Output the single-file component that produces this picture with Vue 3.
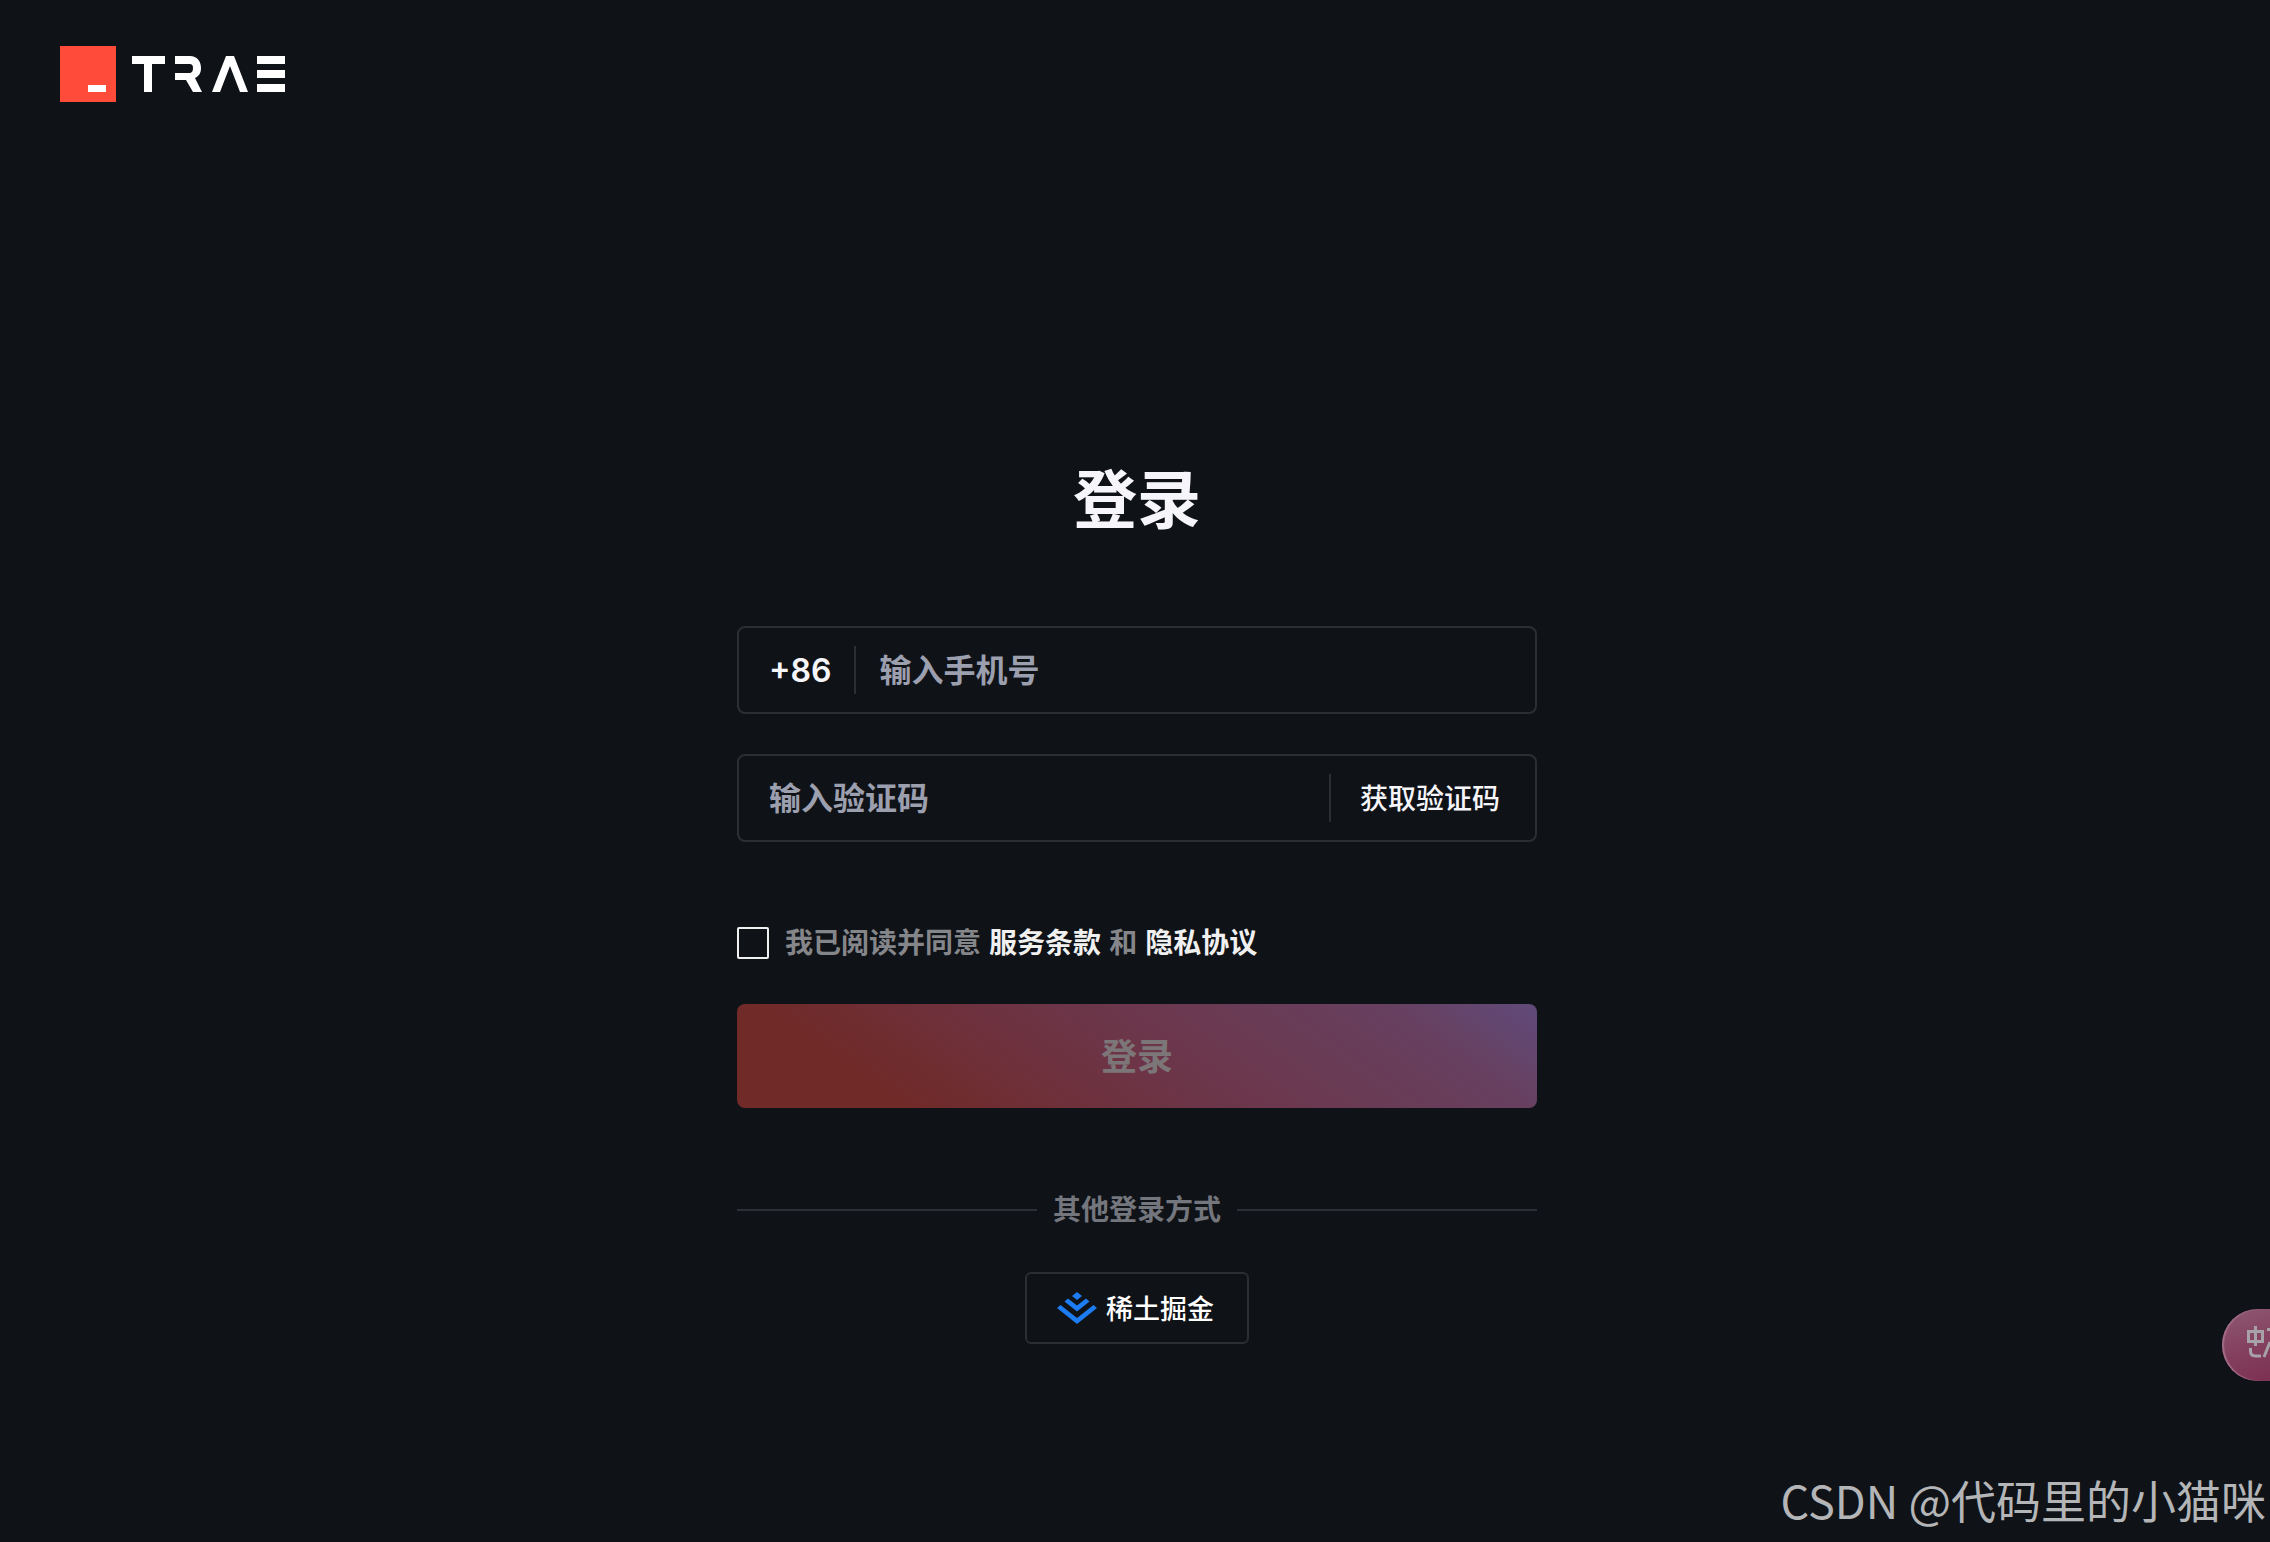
<template>
  <div class="page">
    <header class="header">
      <a href="#" class="logo" aria-label="TRAE">
        <svg width="226" height="56" viewBox="0 0 226 56" fill="none">
          <rect width="56" height="56" fill="#ff4c3a" />
          <rect x="28" y="39" width="18" height="7" fill="#fff" />
          <g fill="#fff">
            <path d="M72 10h33v8H92v28h-8V18H72z" />
            <path d="M115 10h15c7 0 11 5 11 12 0 5-2 8-6 10l7 14h-9l-7-12h-11v-7h14c3 0 4-2 4-5s-1-4-4-4h-14z" />
            <path d="M152 46l14-36h8l14 36h-8l-10-26-10 26z" />
            <path d="M197 10h28v8h-28zM197 24h28v8h-28zM197 38h28v8h-28z" />
          </g>
        </svg>
      </a>
    </header>

    <main class="main">
      <form class="login-form" @submit.prevent>
        <h1 class="title">登录</h1>

        <div class="field phone-field">
          <label for="phone" class="prefix">+86</label>
          <span class="separator"></span>
          <input id="phone" v-model="phone" type="tel" placeholder="输入手机号" />
        </div>

        <div class="field code-field">
          <input id="code" v-model="code" type="text" placeholder="输入验证码" aria-label="输入验证码" />
          <span class="separator"></span>
          <button type="button" class="code-button">获取验证码</button>
        </div>

        <div class="agreement">
          <input id="agree" v-model="agreed" type="checkbox" />
          <p><label for="agree">我已阅读并同意</label> <a href="#">服务条款</a> 和 <a href="#">隐私协议</a></p>
        </div>

        <button type="submit" class="submit-button" :disabled="!canSubmit">登录</button>

        <div class="divider">其他登录方式</div>

        <button type="button" class="juejin-button">
          <svg width="40" height="32" viewBox="0 0 40 32" fill="#1e7cf2">
            <path d="M20 0l5 4-5 4-5-4z" />
            <path d="M20 13.500l9-7 3.500 3L20 19.500 7.500 9.500l3.500-3z" />
            <path d="M20 26l16.500-13 3.500 3-20 16L0 16l3.500-3z" />
          </svg>
          <span>稀土掘金</span>
        </button>
      </form>
    </main>

    <button type="button" class="translate-button" aria-label="翻译">
      <svg width="48" height="72" viewBox="0 0 48 72" fill="none" stroke="#a6a2a7" stroke-width="3">
        <path d="M26.500 22.500h14v10h-14zM33.500 17v20" />
        <path d="M28.500 39v3q0 5 5 5H39M42 48l6-15M45 20.500h3" />
      </svg>
    </button>
    <div class="watermark">CSDN @代码里的小猫咪</div>
  </div>
</template>

<script setup>
import { ref, computed } from 'vue';

const phone = ref('');
const code = ref('');
const agreed = ref(false);

const canSubmit = computed(() => phone.value && code.value && agreed.value);
</script>

<style>
body {
  background: #0f1217;
}
</style>

<style scoped>
.page {
  position: relative;
  min-height: 100vh;
  overflow: hidden;
  background: #0f1217;
  color: #f5f5fa;
  font-family: Inter, "Noto Sans CJK SC", sans-serif;
}

button,
input {
  margin: 0;
  padding: 0;
  border: none;
  background: none;
  color: inherit;
  font: inherit;
}

a {
  color: inherit;
  text-decoration: none;
}

.header {
  padding: 46px 60px 0;
}

.logo {
  display: flex;
  width: fit-content;
}

.main {
  display: flex;
  justify-content: center;
  padding: 350px 0 0 4px;
}

.login-form {
  display: flex;
  flex-direction: column;
  width: 100%;
  max-width: 800px;
}

.title {
  margin: 0 0 78px;
  font-size: 64px;
  line-height: 96px;
  font-weight: 700;
  text-align: center;
}

.field {
  display: flex;
  align-items: center;
  box-sizing: border-box;
  height: 88px;
  padding: 0 30px;
  border: 2px solid #2b2e33;
  border-radius: 8px;
  font-size: 32px;
  font-weight: 600;
}

.field input {
  flex: 1;
  min-width: 0;
  height: 48px;
  outline: none;
}

.field input::placeholder {
  color: #9b9fae;
  opacity: 1;
}

.separator {
  width: 2px;
  height: 48px;
  background: #2b2e33;
}

.phone-field .separator {
  margin: 0 23px;
}

.code-field {
  margin-top: 40px;
  padding-right: 35px;
}

.code-button {
  margin-left: 29px;
  padding-bottom: 2px;
  font-size: 28px;
  font-weight: 500;
  cursor: pointer;
}

.agreement {
  display: flex;
  align-items: center;
  gap: 16px;
  margin: 80px 0 40px;
  font-size: 28px;
  line-height: 42px;
  font-weight: 600;
  color: #85868a;
}

.agreement p {
  margin: 0;
}

.agreement a {
  margin: 0 1px;
  color: #f0f0f0;
}

.agreement input {
  appearance: none;
  width: 32px;
  height: 32px;
  border: 2px solid #f0f0f0;
  border-radius: 2px;
}

.agreement input:checked {
  background: #ff4c3a;
}

.submit-button {
  height: 104px;
  padding-bottom: 4px;
  border-radius: 8px;
  background: linear-gradient(35deg, #702a28 18%, #6d3445 46%, #674060 84%, #604a7a 100%);
  font-size: 36px;
  font-weight: 700;
}

.submit-button:disabled {
  color: #7c7678;
}

.divider {
  display: flex;
  align-items: center;
  gap: 16px;
  margin: 80px 0 40px;
  font-size: 28px;
  line-height: 44px;
  font-weight: 600;
  color: #74767d;
}

.divider::before,
.divider::after {
  content: "";
  flex: 1;
  height: 2px;
  background: #2d2f38;
}

.juejin-button {
  display: flex;
  align-items: center;
  align-self: center;
  gap: 9px;
  box-sizing: border-box;
  height: 72px;
  padding: 0 33px 0 30px;
  border: 2px solid #2b2e33;
  border-radius: 6px;
  color: #fff;
  font-size: 27px;
  font-weight: 500;
  cursor: pointer;
}

.juejin-button span {
  padding-bottom: 2px;
}

.translate-button {
  position: absolute;
  right: 0;
  bottom: 161px;
  width: 48px;
  height: 72px;
  border-radius: 36px 0 0 36px;
  background: linear-gradient(160deg, #8c5570 10%, #84405f 55%, #7c3052);
  box-shadow: inset 2px 0 1px #a36d87;
}

.translate-button svg {
  display: block;
}

.watermark {
  position: absolute;
  right: 4px;
  bottom: 8px;
  color: #b4b5b7;
  font-family: "Noto Sans CJK SC", sans-serif;
  font-size: 45px;
  line-height: 68px;
  font-weight: 400;
}
</style>
